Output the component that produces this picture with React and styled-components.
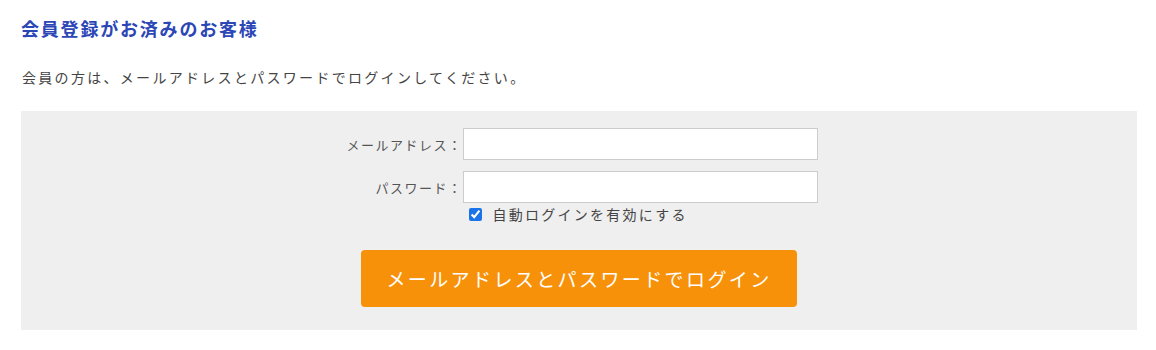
import React from "react";
import styled, { createGlobalStyle } from "styled-components";

const Global = createGlobalStyle`
  html, body { margin: 0; padding: 0; background: #fff; }
  body { font-family: "Noto Sans CJK JP", "Noto Sans", sans-serif; color: #444; }
`;

const Page = styled.div`
  padding: 14px 19px 0 21px;
`;

const Heading = styled.h2`
  margin: 0;
  font-size: 18px;
  line-height: 28px;
  font-weight: 700;
  letter-spacing: 1.8px;
  color: #2c46b6;
`;

const Lead = styled.p`
  margin: 24px 0 0 1px;
  font-size: 14px;
  line-height: 22px;
  letter-spacing: 2.3px;
  color: #444;
`;

const Panel = styled.form`
  margin-top: 23px;
  background: #efefef;
  padding: 17px 0 23px;
  display: flex;
  flex-direction: column;
  align-items: center;
`;

const Row = styled.div`
  display: flex;
  align-items: center;
  margin-bottom: ${(p) => p.$gap || 0}px;
`;

const Label = styled.label`
  width: 122px;
  text-align: right;
  font-size: 13px;
  letter-spacing: 1.5px;
  color: #555;
`;

const Input = styled.input`
  box-sizing: border-box;
  width: 355px;
  height: 32px;
  border: 1px solid #ccc;
  background: #fff;
  margin: 0;
  padding: 0 6px;
  font: inherit;
`;

const CheckRow = styled.label`
  display: flex;
  align-items: center;
  width: 477px;
  padding-left: 128px;
  box-sizing: border-box;
  margin-top: 1px;
  font-size: 14px;
  letter-spacing: 2.25px;
  color: #444;
  line-height: 20px;
`;

const Check = styled.input`
  width: 13px;
  height: 13px;
  margin: 0 11px 0 0;
  accent-color: #1a73e8;
`;

const Button = styled.button`
  margin-top: 26px;
  width: 436px;
  height: 57px;
  border: none;
  border-radius: 4px;
  background: #f7910a;
  color: #fff;
  font-family: inherit;
  font-size: 19px;
  letter-spacing: 2.4px;
  cursor: pointer;
`;

export default function App() {
  return (
    <>
      <Global />
      <Page>
        <Heading>会員登録がお済みのお客様</Heading>
        <Lead>会員の方は、メールアドレスとパスワードでログインしてください。</Lead>
        <Panel onSubmit={(e) => e.preventDefault()}>
          <Row $gap={11}>
            <Label htmlFor="email">メールアドレス：</Label>
            <Input id="email" type="email" />
          </Row>
          <Row>
            <Label htmlFor="pw">パスワード：</Label>
            <Input id="pw" type="password" />
          </Row>
          <CheckRow>
            <Check type="checkbox" defaultChecked />
            自動ログインを有効にする
          </CheckRow>
          <Button type="submit">メールアドレスとパスワードでログイン</Button>
        </Panel>
      </Page>
    </>
  );
}
